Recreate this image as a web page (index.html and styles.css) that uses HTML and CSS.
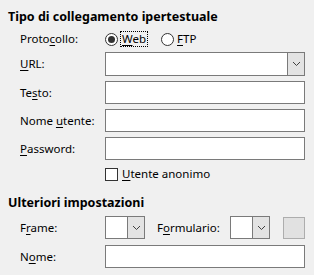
FILE: index.html
```html
<!DOCTYPE html>
<html lang="it">
<head>
  <meta charset="UTF-8">
  <title>Collegamento ipertestuale</title>
  <link rel="stylesheet" href="styles.css">
</head>
<body>
  <div class="dialog">
    <h2 class="section-title">Tipo di collegamento ipertestuale</h2>
    <div class="form-grid">
      <span class="label">Proto<u>c</u>ollo:</span>
      <div class="radios">
        <label class="radio"><span class="dot checked"></span><span class="focus"><u>W</u>eb</span></label>
        <label class="radio"><span class="dot"></span><span><u>F</u>TP</span></label>
      </div>

      <span class="label"><u>U</u>RL:</span>
      <div class="combo wide">
        <span class="combo-field"></span>
        <span class="combo-btn"><svg width="9" height="6" viewBox="0 0 9 6"><polyline points="1,1 4.5,4.5 8,1" fill="none" stroke="#404040" stroke-width="1"/></svg></span>
      </div>

      <span class="label">Te<u>s</u>to:</span>
      <div class="field"></div>

      <span class="label">Nome <u>u</u>tente:</span>
      <div class="field"></div>

      <span class="label"><u>P</u>assword:</span>
      <div class="field"></div>

      <span></span>
      <label class="check"><span class="box"></span><span><u>U</u>tente anonimo</span></label>
    </div>

    <h2 class="section-title second">Ulteriori impostazioni</h2>
    <div class="form-grid tight">
      <span class="label">F<u>r</u>ame:</span>
      <div class="frame-row">
        <div class="combo small">
          <span class="combo-field"></span>
          <span class="combo-btn"><svg width="9" height="6" viewBox="0 0 9 6"><polyline points="1,1 4.5,4.5 8,1" fill="none" stroke="#404040" stroke-width="1"/></svg></span>
        </div>
        <span class="label inline">F<u>o</u>rmulario:</span>
        <div class="combo small">
          <span class="combo-field"></span>
          <span class="combo-btn"><svg width="9" height="6" viewBox="0 0 9 6"><polyline points="1,1 4.5,4.5 8,1" fill="none" stroke="#404040" stroke-width="1"/></svg></span>
        </div>
        <span class="square-btn"></span>
      </div>

      <span class="label">N<u>o</u>me:</span>
      <div class="field"></div>
    </div>
  </div>
</body>
</html>
```

FILE: styles.css
```css
body {
  margin: 0;
  background: #f0f0f0;
  font-family: "Noto Sans", "Open Sans", sans-serif;
  font-size: 11.5px;
  color: #000;
}
.dialog {
  width: 314px;
  height: 275px;
  padding: 9px 9px 0 8px;
  box-sizing: border-box;
}
.section-title {
  margin: 0;
  font-size: 12.5px;
  font-weight: bold;
  line-height: 16px;
}
.section-title.second {
  margin-top: 12px;
}
.form-grid {
  display: grid;
  grid-template-columns: 85px 200px;
  grid-template-rows: 16px 24px 23px 23px 23px 18px;
  row-gap: 5px;
  margin: 6px 0 0 12px;
  align-items: center;
}
.form-grid.tight {
  grid-template-rows: 23px 23px;
  row-gap: 6px;
  margin-top: 5px;
}
.label {
  line-height: 16px;
  white-space: nowrap;
}
u {
  text-decoration-thickness: 1px;
  text-underline-offset: 2px;
}
.radios {
  display: flex;
  gap: 14px;
  align-items: center;
}
.radio,
.check {
  display: flex;
  align-items: center;
  gap: 3px;
  line-height: 14px;
}
.dot {
  width: 11px;
  height: 11px;
  border: 1px solid #333;
  border-radius: 50%;
  background: #fff;
  position: relative;
}
.dot.checked::after {
  content: "";
  position: absolute;
  left: 2px;
  top: 2px;
  width: 7px;
  height: 7px;
  border-radius: 50%;
  background: #333;
}
.focus {
  outline: 1px dotted #000;
  padding: 0 1px;
}
.box {
  width: 11px;
  height: 11px;
  border: 1px solid #333;
  background: #fff;
  margin-right: 1px;
}
.field {
  height: 23px;
  box-sizing: border-box;
  border: 1px solid #7a7a7a;
  background: #fff;
}
.combo {
  display: flex;
  height: 24px;
  box-sizing: border-box;
  border: 1px solid #7a7a7a;
  background: #fff;
}
.combo.small {
  width: 40px;
  height: 23px;
}
.combo-field {
  flex: 1;
}
.combo-btn {
  width: 16px;
  background: #e3e3e3;
  border-left: 1px solid #7a7a7a;
  display: flex;
  align-items: center;
  justify-content: center;
}
.frame-row {
  display: flex;
  align-items: center;
}
.label.inline {
  margin: 0 12px 0 12px;
  width: 61px;
}
.square-btn {
  width: 20px;
  height: 20px;
  margin-left: auto;
  background: #e1e1e1;
  border: 1px solid #adadad;
}
```
